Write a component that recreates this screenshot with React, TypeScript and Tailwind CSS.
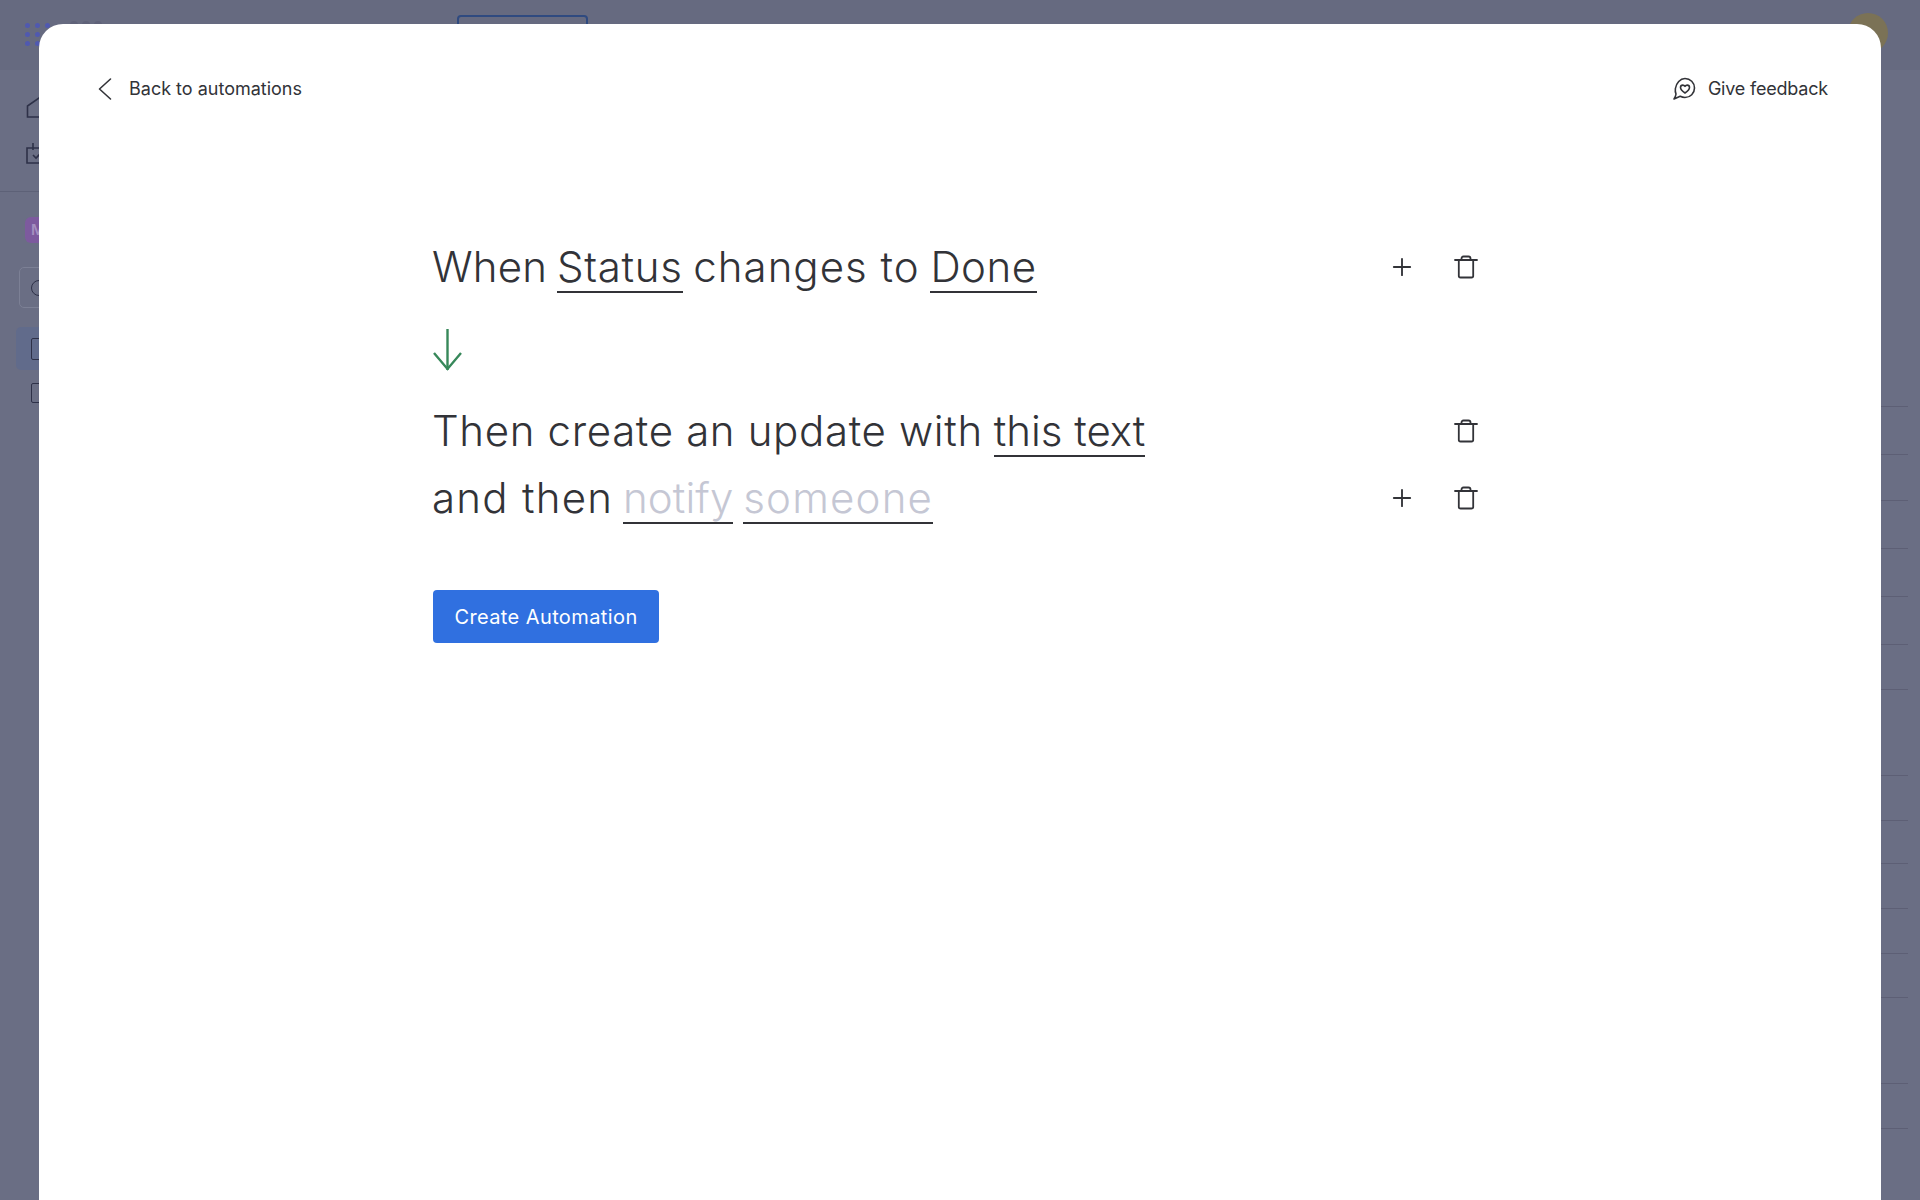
import { Plus } from "lucide-react";

const rowLines = [
  { top: 406 },
  { top: 454 },
  { top: 500 },
  { top: 548 },
  { top: 596 },
  { top: 644 },
  { top: 689 },
  { top: 775 },
  { top: 820 },
  { top: 863 },
  { top: 908 },
  { top: 953 },
  { top: 997 },
  { top: 1083 },
  { top: 1128 },
];

const TrashIcon = () => (
  <svg width="24" height="24" viewBox="0 0 24 24" fill="none" stroke="#323338" strokeWidth="1.8" strokeLinecap="round" strokeLinejoin="round">
    <path d="M1 5h22" />
    <path d="M7.500 5V3.500c0-1 .7-2 2-2h5c1.300 0 2 1 2 2V5" />
    <path d="M4.800 5v16c0 1 .7 1.500 1.700 1.500h11c1 0 1.700-.5 1.700-1.500V5" />
  </svg>
);

const ChevronIcon = () => (
  <svg width="14" height="24" viewBox="0 0 14 24" fill="none" stroke="#323338" strokeWidth="1.6" strokeLinecap="round" strokeLinejoin="round">
    <path d="M12.500 2 1.500 12l11 10" />
  </svg>
);

const FeedbackIcon = () => (
  <svg width="24" height="24" viewBox="0 0 24 24" fill="none" stroke="#323338" strokeWidth="1.6" strokeLinecap="round" strokeLinejoin="round">
    <path d="M13 1.500c5.300 0 9.500 4.200 9.500 9.500s-4.200 9.500-9.500 9.500c-1.700 0-3.300-.4-4.800-1.200L2 22c1.100-1.500 1.800-3.200 2-5-.7-1.700-.9-3.500-.6-5.500.8-5.500 4.800-10 9.600-10Z" />
    <path d="M13 16c-2.300-1.500-4.500-3.200-4.500-5.500 0-1.400 1.100-2.400 2.300-2.400 1 0 1.700.5 2.200 1.300.5-.8 1.200-1.300 2.200-1.300 1.200 0 2.300 1 2.300 2.400 0 2.300-2.200 4-4.500 5.500Z" />
  </svg>
);

const Token = ({ children, muted, className }: { children: string; muted?: boolean; className?: string }) => (
  <span className={`inline-block h-[59px] border-b-2 border-[#323338] ${muted ? "text-[#c5c7d4]" : ""} ${className ?? ""}`}>{children}</span>
);

const Backdrop = () => (
  <div className="relative h-[1200px] overflow-hidden bg-[#6a6e84]">
    {/* top bar */}
    <div className="flex h-[70px] items-start bg-[#666a80] pl-[25px] pr-[32px]">
      <div className="mt-[23px] grid w-[25px] grid-cols-3 gap-x-[5px] gap-y-[4px]">
        {[0, 1, 2, 3, 4, 5, 6, 7, 8].map((i) => (
          <span key={i} className="h-[5px] w-[5px] rounded-full bg-[#5059b0]" />
        ))}
      </div>
      <div className="ml-[20px] mt-[21px] flex gap-[4px]">
        <span className="h-[4px] w-[8px] rounded-t-full bg-[#5f6279]" />
        <span className="h-[4px] w-[8px] rounded-t-full bg-[#5f6279]" />
        <span className="h-[4px] w-[8px] rounded-t-full bg-[#5f6279]" />
      </div>
      <div className="ml-[355px] mt-[15px] h-[44px] w-[131px] rounded-[4px] border-2 border-[#2f4a80]" />
      <div className="ml-auto mt-[13px] h-[40px] w-[40px] rounded-full bg-[#7b7256]" />
    </div>

    {/* sidebar bits, the modal covers most of them */}
    <div className="flex w-[39px] flex-col overflow-hidden">
      <svg className="ml-[26px] mt-[27px] shrink-0" width="26" height="21" viewBox="0 0 26 21" fill="none" stroke="#2e3148" strokeWidth="1.6">
        <path d="M1.500 20V9L13 1l11.500 8v11Z" />
      </svg>
      <svg className="ml-[26px] mt-[25px] shrink-0" width="24" height="21" viewBox="0 0 24 21" fill="none" stroke="#2e3148" strokeWidth="1.6">
        <path d="M1 5h22v15H1Z" />
        <path d="M7 0v7" />
        <path d="m7 12 3 3 5-5" />
      </svg>
      <div className="mt-[27px] h-px w-full shrink-0 bg-[#5d6177]" />
      <div className="ml-[25px] mt-[25px] flex h-[26px] w-[26px] shrink-0 items-center justify-center rounded-[6px] bg-[#7d5a9e] text-[15px] font-semibold text-[#a58fc0]">
        M
      </div>
      <div className="ml-[19px] mt-[24px] flex h-[41px] w-[40px] shrink-0 items-center rounded-[5px] border border-[#7c8095] pl-[11px]">
        <span className="h-[16px] w-[16px] rounded-full border-[1.5px] border-[#2e3148]" />
      </div>
      <div className="ml-[16px] mt-[19px] flex h-[43px] w-[40px] shrink-0 items-center rounded-[5px] bg-[#616b8b] pl-[15px]">
        <span className="h-[22px] w-[20px] rounded-[2px] border-[1.5px] border-[#2e3148]" />
      </div>
      <span className="ml-[31px] mt-[13px] h-[20px] w-[20px] shrink-0 rounded-[2px] border-[1.5px] border-[#2e3148]" />
    </div>

    {/* table row lines to the right of the modal */}
    {rowLines.map((line) => (
      <div key={line.top} className="absolute right-[12px] h-px w-[40px] bg-[#5d5f75]" style={{ top: line.top }} />
    ))}
  </div>
);

const App = () => {
  return (
    <div className="relative h-[1200px] overflow-hidden font-['Inter',sans-serif]">
      <Backdrop />

      {/* automation modal */}
      <div className="absolute bottom-0 left-[39px] right-[39px] top-[24px] rounded-t-[24px] bg-white text-[#323338]">
        <div className="flex items-center justify-between pl-[59px] pr-[53px] pt-[53px]">
          <div className="flex items-center gap-[17px] text-[18px] leading-[24px]">
            <ChevronIcon />
            <span>Back to automations</span>
          </div>
          <div className="flex items-center gap-[12px] text-[18px] leading-[24px] tracking-[-0.2px]">
            <FeedbackIcon />
            <span>Give feedback</span>
          </div>
        </div>

        <div className="ml-[393px] mr-[403px] mt-[133px] text-[42px] font-light leading-[66px]">
          <div className="flex h-[66px] items-center justify-between">
            <div>
              <span className="tracking-[0.2px]">When</span> <Token className="-ml-[2px] tracking-[0.7px]">Status</Token>{" "}
              <span className="-ml-[1px] tracking-[1px]">changes to</span> <Token className="-ml-[1px] tracking-[0.5px]">Done</Token>
            </div>
            <div className="flex items-center gap-[38px]">
              <Plus size={28} strokeWidth={1.6} />
              <TrashIcon />
            </div>
          </div>

          <svg className="ml-[1px] mt-[29px]" width="30" height="44" viewBox="0 0 30 44" fill="none" stroke="#37885a" strokeWidth="2.4">
            <path d="M14.500 0v41" />
            <path d="M1 24l13.500 16L28 24" />
          </svg>

          <div className="mt-[25px] flex h-[66px] items-center justify-between">
            <div>
              <span className="tracking-[0.65px]">Then create an update with</span> <Token className="-ml-[1px]">this text</Token>
            </div>
            <TrashIcon />
          </div>

          <div className="mt-[1px] flex h-[66px] items-center justify-between">
            <div>
              <span className="tracking-[1.25px]">and then</span> <Token muted className="-ml-[2px] tracking-[0.1px]">notify</Token>{" "}
              <Token muted className="-ml-[2px] tracking-[1.2px]">someone</Token>
            </div>
            <div className="flex items-center gap-[38px]">
              <Plus size={28} strokeWidth={1.6} />
              <TrashIcon />
            </div>
          </div>

          <button className="ml-[1px] mt-[59px] flex h-[53px] w-[226px] items-center justify-center rounded-[4px] bg-[#3070e0] text-[20px] font-normal tracking-[0.4px] text-white">
            Create Automation
          </button>
        </div>
      </div>
    </div>
  );
};

export default App;
